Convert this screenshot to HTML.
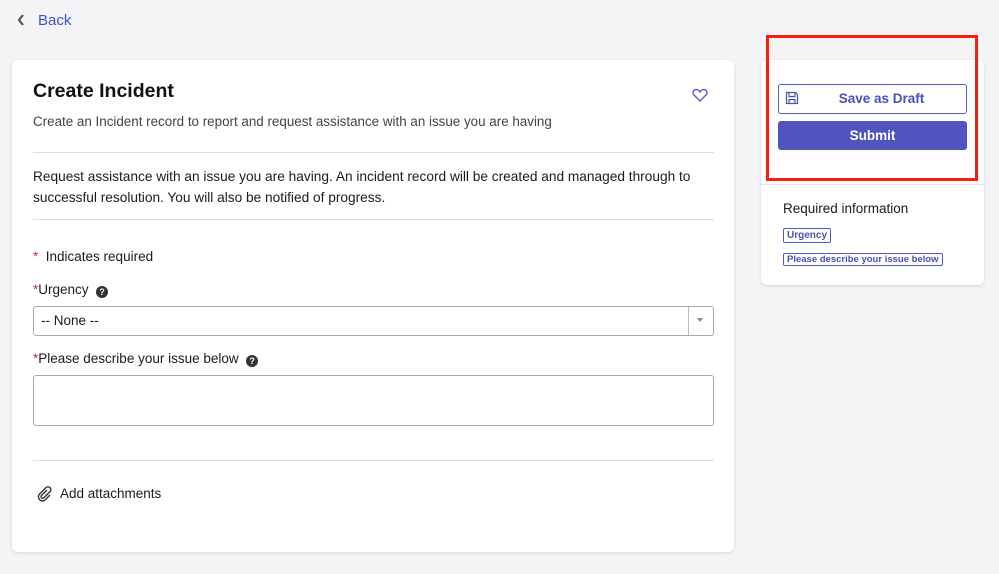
<!DOCTYPE html>
<html><head><meta charset="utf-8"><style>
*{margin:0;padding:0;box-sizing:border-box}
body{width:999px;height:574px;background:#f4f4f6;font-family:"Liberation Sans",sans-serif;position:relative;overflow:hidden;color:#1b1b1b}
.a{position:absolute;white-space:nowrap}
.card{position:absolute;background:#fff;border-radius:6px;box-shadow:0 1px 3px rgba(0,0,0,.12)}
.hr{position:absolute;left:33px;width:681px;height:1px;background:#dcdcdc}
.req{color:#e0262b}
</style></head><body>
<svg class="a" style="left:16px;top:13px" width="10" height="14" viewBox="0 0 10 14"><path d="M7 2L3 7l4 5" stroke="#555" stroke-width="2.2" fill="none"/></svg>
<div class="a" style="left:38px;top:12px;font-size:15px;color:#3f51c8">Back</div>

<div class="card" style="left:12px;top:60px;width:722px;height:492px"></div>
<div class="a" style="left:33px;top:80px;font-size:19.5px;font-weight:bold;color:#111">Create Incident</div>
<svg class="a" style="left:692px;top:88px" width="16" height="14" viewBox="0 0 16 14"><path d="M8 13L2 7C0 5 1 1.5 4.2 1.5 6 1.5 7.3 2.8 8 4 8.7 2.8 10 1.5 11.8 1.5 15 1.5 16 5 14 7z" stroke="#4f52c4" stroke-width="1.3" fill="none"/></svg>
<div class="a" style="left:33px;top:114px;font-size:13.4px;color:#444">Create an Incident record to report and request assistance with an issue you are having</div>
<div class="hr" style="top:152px"></div>
<div class="a" style="left:33px;top:166px;font-size:13.7px;line-height:21px;color:#1b1b1b">Request assistance with an issue you are having. An incident record will be created and managed through to<br>successful resolution. You will also be notified of progress.</div>
<div class="hr" style="top:219px"></div>
<div class="a" style="left:33px;top:249px;font-size:13.5px"><span class="req">*</span>&nbsp; Indicates required</div>
<div class="a" style="left:33px;top:282px;font-size:13.5px"><span class="req">*</span>Urgency &nbsp;<span style="display:inline-block;width:12px;height:12px;border-radius:50%;background:#333;color:#fff;font-size:9px;font-weight:bold;text-align:center;line-height:12px;vertical-align:-1px">?</span></div>
<div class="a" style="left:33px;top:306px;width:681px;height:30px;border:1px solid #a9a9b3;border-radius:3px"></div>
<div class="a" style="left:41px;top:313px;font-size:13.5px">-- None --</div>
<div class="a" style="left:688px;top:307px;width:1px;height:28px;background:#bbb"></div>
<div class="a" style="left:697px;top:318px;width:0;height:0;border-left:3px solid transparent;border-right:3px solid transparent;border-top:4px solid #888"></div>
<div class="a" style="left:33px;top:351px;font-size:13.5px"><span class="req">*</span>Please describe your issue below &nbsp;<span style="display:inline-block;width:12px;height:12px;border-radius:50%;background:#333;color:#fff;font-size:9px;font-weight:bold;text-align:center;line-height:12px;vertical-align:-1px">?</span></div>
<div class="a" style="left:33px;top:375px;width:681px;height:51px;border:1px solid #a9a9b3;border-radius:3px"></div>
<div class="hr" style="top:460px"></div>
<svg class="a" style="left:37px;top:486px" width="16" height="16" viewBox="0 0 16 16"><path d="M10 4L4.5 9.5a1.6 1.6 0 0 0 2.3 2.3L13 5.6a2.8 2.8 0 0 0-4-4L2.6 8a4 4 0 0 0 5.7 5.7L13 9" stroke="#333" stroke-width="1.4" fill="none"/></svg>
<div class="a" style="left:60px;top:486px;font-size:13.5px">Add attachments</div>

<div class="card" style="left:761px;top:60px;width:223px;height:225px"></div>
<div class="a" style="left:761px;top:184px;width:223px;height:1px;background:#e5e5e5"></div>
<div class="a" style="left:778px;top:84px;width:189px;height:30px;border:1px solid #5558c8;border-radius:3px;background:#fff"></div>
<svg class="a" style="left:785px;top:91px" width="14" height="14" viewBox="0 0 14 14"><path d="M1.5 1.5h9l2 2v9h-11z M4 1.5v4h6v-4 M4 12.5v-4h6v4" stroke="#4f52a8" stroke-width="1.2" fill="none"/></svg>
<div class="a" style="left:778px;top:91px;width:189px;text-align:center;font-size:13.5px;font-weight:bold;color:#4b4fb8;padding-left:18px">Save as Draft</div>
<div class="a" style="left:778px;top:121px;width:189px;height:29px;background:#5153be;border-radius:3px;color:#fff;font-size:13.5px;font-weight:bold;text-align:center;line-height:29px">Submit</div>
<div class="a" style="left:783px;top:201px;font-size:13.5px">Required information</div>
<div class="a" style="left:783px;top:228px;border:1px solid #5558c8;border-radius:2px;font-size:10px;font-weight:bold;color:#4b4fb8;padding:1px 3px">Urgency</div>
<div class="a" style="left:783px;top:253px;border:1px solid #5558c8;border-radius:2px;font-size:9.5px;font-weight:bold;color:#4b4fb8;padding:0 3px">Please describe your issue below</div>

<div class="a" style="left:766px;top:35px;width:212px;height:146px;border:3px solid #f4200c"></div>
</body></html>
